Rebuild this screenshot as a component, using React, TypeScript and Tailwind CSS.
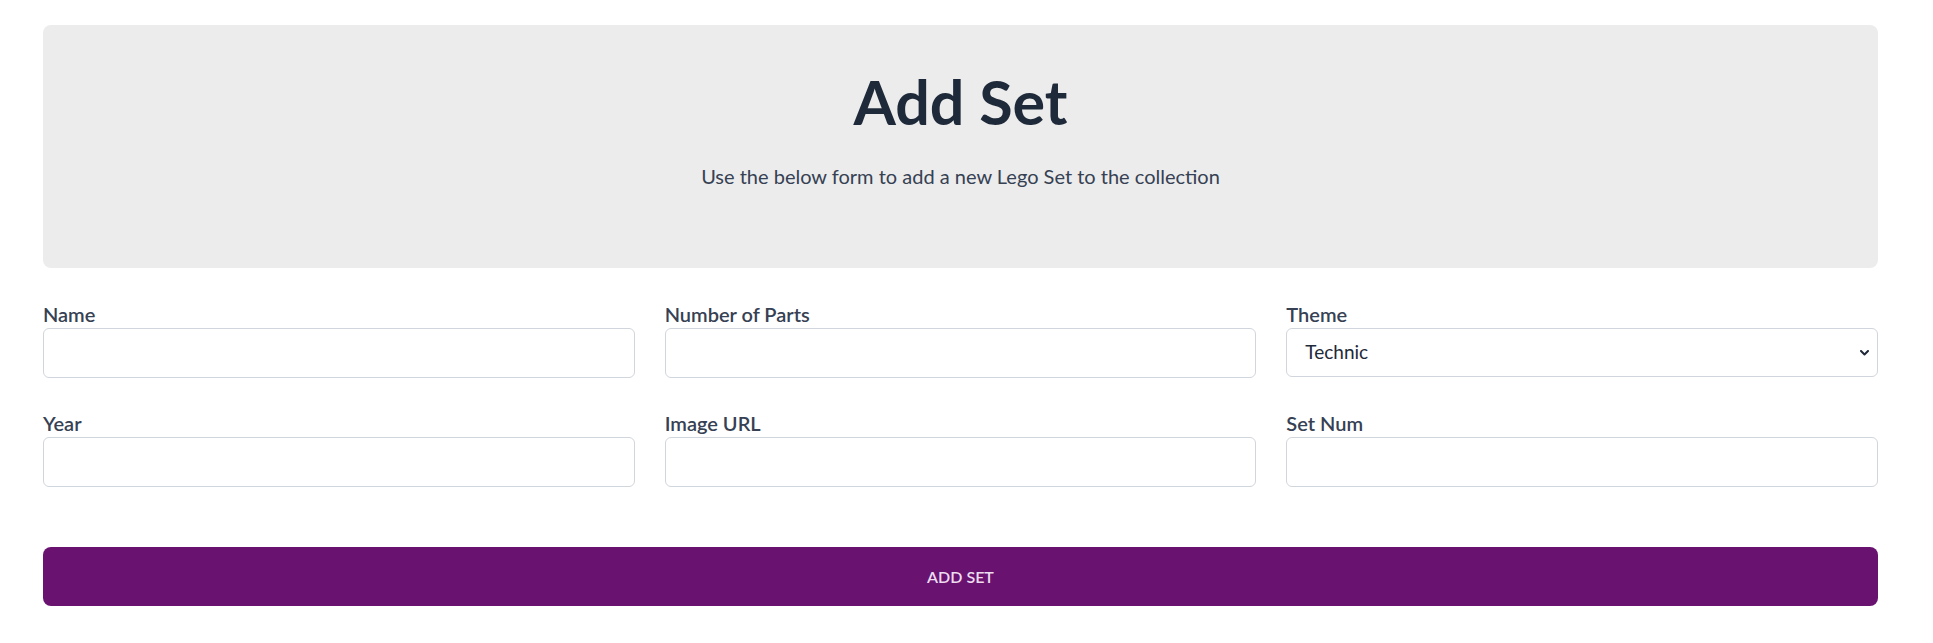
import { useState } from 'react';

const fields = [
  { label: 'Name', type: 'input' },
  { label: 'Number of Parts', type: 'input' },
  { label: 'Theme', type: 'select' },
  { label: 'Year', type: 'input' },
  { label: 'Image URL', type: 'input' },
  { label: 'Set Num', type: 'input' },
];

function ChevronDown() {
  return (
    <svg width="9" height="6" viewBox="0 0 9 6" className="pointer-events-none absolute right-[9px] top-1/2 -translate-y-1/2">
      <path d="M1 1l3.5 3.5L8 1" fill="none" stroke="#1f2937" strokeWidth="2" strokeLinecap="round" strokeLinejoin="round" />
    </svg>
  );
}

export default function App() {
  const [theme, setTheme] = useState('Technic');

  return (
    <div className="min-h-screen bg-white pl-[43px] pr-[55px] pt-[25px] font-['Lato',sans-serif]">
      {/* Header */}
      <div className="flex h-[243px] flex-col items-center rounded-lg bg-[#ececec] pt-[47px]">
        <h1 className="text-[61px] leading-[60px] font-bold text-gray-800">Add Set</h1>
        <p className="mt-[30px] text-xl leading-7 text-gray-700">
          Use the below form to add a new Lego Set to the collection
        </p>
      </div>

      {/* Form */}
      <form className="mt-[32px] grid grid-cols-3 gap-x-[30px] gap-y-[31px]">
        {fields.map((f) => (
          <div key={f.label} className="flex flex-col">
            <label className="text-xl leading-7 font-semibold text-gray-700">{f.label}</label>
            {f.type === 'select' ? (
              <div className="relative">
                <select
                  value={theme}
                  onChange={(e) => setTheme(e.target.value)}
                  className="h-[49px] w-full appearance-none rounded-md border border-gray-300 bg-white pl-[18px] text-[19px] text-gray-800 outline-none"
                >
                  <option>Technic</option>
                  <option>City</option>
                  <option>Star Wars</option>
                  <option>Creator</option>
                </select>
                <ChevronDown />
              </div>
            ) : (
              <input
                type="text"
                className="h-[50px] w-full rounded-md border border-gray-300 bg-white px-4 text-lg text-gray-800 outline-none"
              />
            )}
          </div>
        ))}
      </form>

      <button
        type="button"
        className="mt-[60px] flex h-[59px] w-full items-center justify-center rounded-lg bg-[#691270] text-base font-semibold uppercase text-[#eddcf0]"
      >
        Add Set
      </button>
    </div>
  );
}
